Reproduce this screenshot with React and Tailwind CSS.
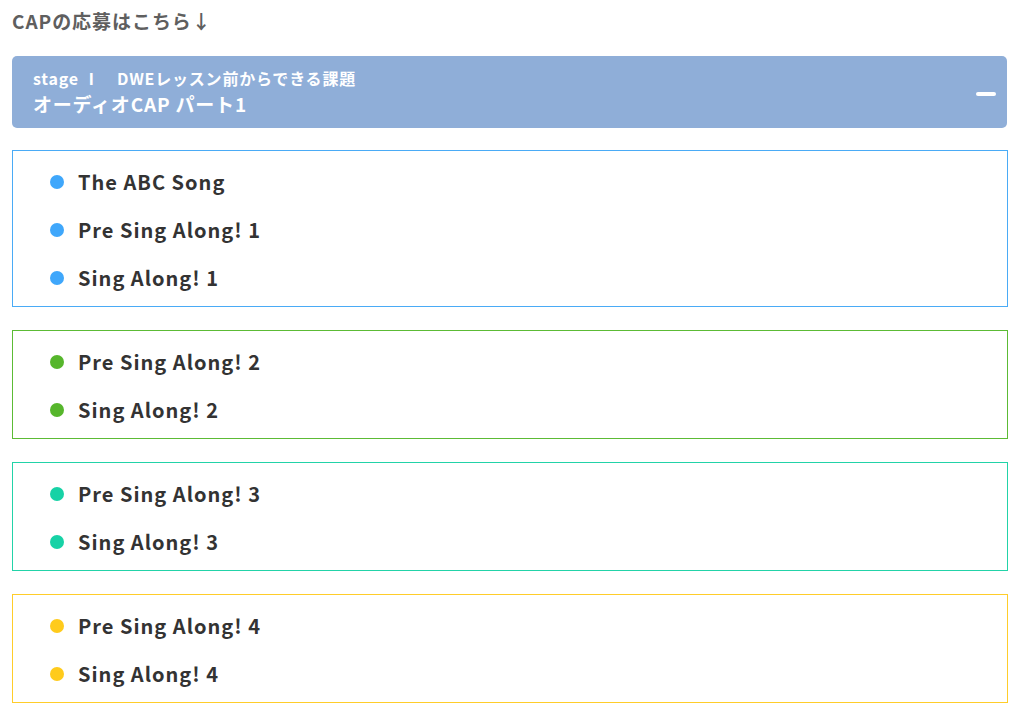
import React from "react";

const groups = [
  { border: "border-[#4aabf6]", dot: "bg-[#3fa7fb]", items: ["The ABC Song", "Pre Sing Along! 1", "Sing Along! 1"] },
  { border: "border-[#5cbb35]", dot: "bg-[#56b62c]", items: ["Pre Sing Along! 2", "Sing Along! 2"] },
  { border: "border-[#22d3a8]", dot: "bg-[#17d2a6]", items: ["Pre Sing Along! 3", "Sing Along! 3"] },
  { border: "border-[#ffcd2a]", dot: "bg-[#ffcb1c]", items: ["Pre Sing Along! 4", "Sing Along! 4"] },
];

export default function App() {
  return (
    <div
      className="w-[1024px] h-[722px] bg-white overflow-hidden px-[12px] pt-[5px]"
      style={{ fontFamily: '"Noto Sans CJK JP", "Noto Sans", sans-serif' }}
    >
      <div className="h-[30px] flex items-center text-[19px] tracking-[0.05em] font-bold text-[#5f5f5f] leading-none">
        CAPの応募はこちら↓
      </div>
      <div className="mt-[21px] w-[995px] h-[72px] rounded-[5px] bg-[#8faed8] flex items-center justify-between pl-[21px] pr-[11px]">
        <div className="flex flex-col text-white font-bold tracking-[0.05em]">
          <div className="text-[16px] leading-[24px]">stage Ⅰ　DWEレッスン前からできる課題</div>
          <div className="text-[19px] leading-[28px]">オーディオCAP パート1</div>
        </div>
        <div className="w-[20px] h-[4px] rounded-[2px] bg-white mt-[3px]" />
      </div>
      <div className="mt-[22px] flex flex-col gap-[23px] w-[996px]">
        {groups.map((g, i) => (
          <div key={i} className={`border ${g.border} pt-[7px] pb-[4px] pl-[37px]`}>
            {g.items.map((t) => (
              <div key={t} className="h-[48px] flex items-center gap-[14px]">
                <span className={`w-[14px] h-[14px] rounded-full ${g.dot} shrink-0`} />
                <span className="text-[20px] font-bold tracking-[0.05em] text-[#333333] leading-none">{t}</span>
              </div>
            ))}
          </div>
        ))}
      </div>
    </div>
  );
}
